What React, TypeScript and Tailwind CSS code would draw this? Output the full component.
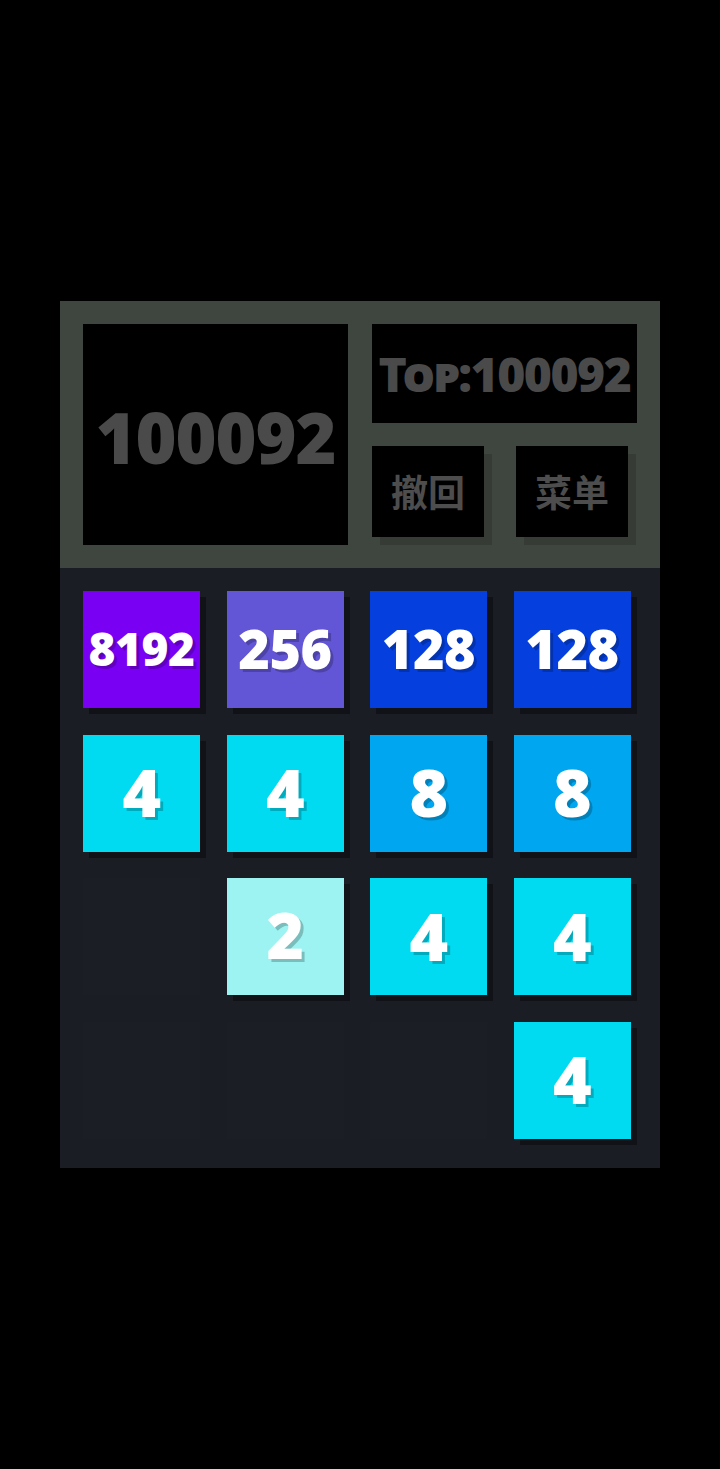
import React from "react";

type Tile = { v: number | null };

const TILE_STYLES: Record<number, string> = {
  2: "bg-[#9cf3f1] text-[64px]",
  4: "bg-[#00dbf2] text-[66px]",
  8: "bg-[#00a6ef] text-[66px]",
  128: "bg-[#0540df] text-[54px]",
  256: "bg-[#6255d6] text-[54px]",
  8192: "bg-[#7a00f3] text-[46px]",
};

const BOARD: (number | null)[] = [
  8192, 256, 128, 128,
  4, 4, 8, 8,
  null, 2, 4, 4,
  null, null, null, 4,
];

const FONT = { fontFamily: '"Noto Sans", "Open Sans", sans-serif' };
const CJK = { fontFamily: '"Noto Sans CJK SC", "Noto Sans", sans-serif' };

function Cell({ v }: Tile) {
  if (v === null) {
    return <div className="h-[117px] w-[117px] bg-[#1b1e25]" />;
  }
  return (
    <div
      className={`flex h-[117px] w-[117px] items-center justify-center pb-[4px] font-black leading-none tracking-[-0.5px] text-white shadow-[6px_6px_0_rgba(0,0,0,0.35)] [text-shadow:3px_3px_0_rgba(0,0,0,0.22)] ${TILE_STYLES[v]}`}
      style={FONT}
    >
      {v}
    </div>
  );
}

function Button({ label }: { label: string }) {
  return (
    <div
      className="flex h-[91px] w-[112px] items-center justify-center bg-black text-[37px] font-bold text-[#4d4d4d] shadow-[8px_8px_0_#363b36]"
      style={CJK}
    >
      {label}
    </div>
  );
}

export default function App() {
  return (
    <div className="min-h-[1469px] w-full bg-black pt-[301px]">
      <div className="mx-auto w-[600px]">
        <div className="flex gap-[24px] bg-[#3e463f] p-[23px]">
          <div
            className="flex h-[221px] w-[265px] items-center justify-center bg-black pt-[6px] text-[70px] font-black tracking-[-1px] text-[#4a4a4a]"
            style={FONT}
          >
            100092
          </div>
          <div className="flex w-[265px] flex-col gap-[23px]">
            <div
              className="flex h-[99px] items-center justify-center bg-black text-[48px] font-black tracking-[-1.5px] text-[#4a4a4a] [font-variant:small-caps]"
              style={FONT}
            >
              Top:100092
            </div>
            <div className="flex gap-[32px]">
              <Button label="撤回" />
              <Button label="菜单" />
            </div>
          </div>
        </div>
        <div className="grid grid-cols-[repeat(4,117px)] gap-[26.5px] bg-[#1a1d24] pb-[29px] pl-[23px] pt-[23px]">
          {BOARD.map((v, i) => (
            <Cell key={i} v={v} />
          ))}
        </div>
      </div>
    </div>
  );
}
